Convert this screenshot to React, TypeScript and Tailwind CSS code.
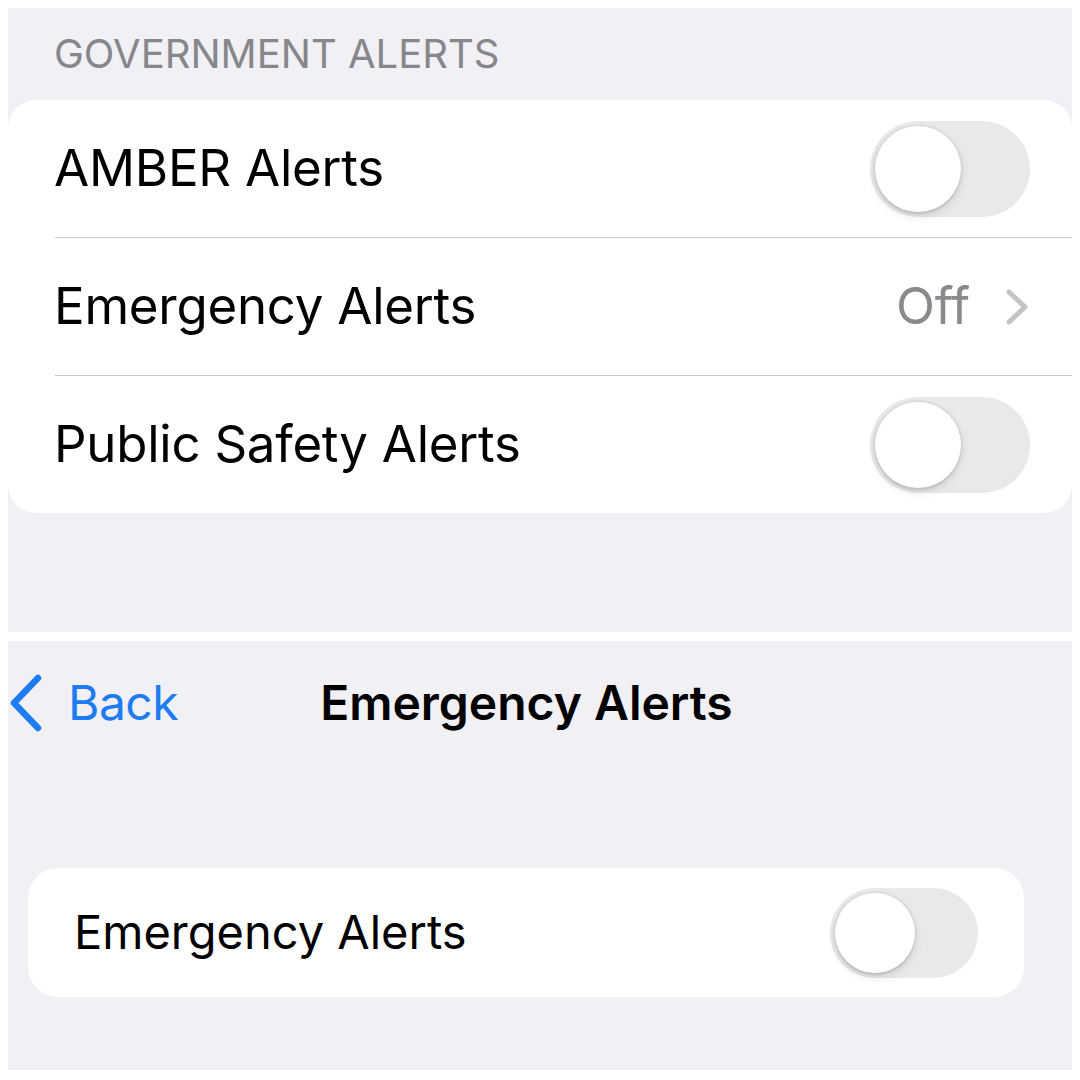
import React from 'react';

type SwitchSize = 'lg' | 'md';

// iOS style switch, always in its "off" state here
function Switch({ size = 'lg' }: { size?: SwitchSize }) {
  const track = size === 'lg' ? 'w-[160px] h-[96px] p-[5px]' : 'w-[148px] h-[90px] p-[5px]';
  const knob = size === 'lg' ? 'w-[86px] h-[86px]' : 'w-[80px] h-[80px]';
  return (
    <div className={`${track} shrink-0 rounded-full bg-[#e9e9eb] flex items-center`}>
      <div
        className={`${knob} rounded-full bg-white shadow-[0_0_0_2px_rgba(0,0,0,0.04),0_4px_10px_rgba(0,0,0,0.12),0_3px_1px_rgba(0,0,0,0.04)]`}
      />
    </div>
  );
}

function Chevron() {
  return (
    <svg width="26" height="38" viewBox="0 0 26 38" fill="none" className="shrink-0">
      <polyline points="5,4 21,19 5,34" stroke="#c4c4c7" strokeWidth="5" strokeLinecap="round" strokeLinejoin="round" />
    </svg>
  );
}

function BackChevron() {
  return (
    <svg width="36" height="58" viewBox="0 0 36 58" fill="none" className="shrink-0">
      <polyline points="29,4 5,29 29,54" stroke="#1d7cf2" strokeWidth="6.5" strokeLinecap="round" strokeLinejoin="round" />
    </svg>
  );
}

const Separator = () => <div className="h-px bg-[#c8c8cc] ml-[47px]" />;

export default function App() {
  return (
    <div className="w-[1080px] h-[1080px] bg-white pt-[8px] px-[8px] pb-[10px] flex flex-col font-['Inter',sans-serif] text-black antialiased">
      {/* Government alerts list */}
      <section className="h-[624px] shrink-0 bg-[#f0f0f5] flex flex-col">
        <div className="h-[92px] flex items-center pl-[46px] text-[40px] text-[#86868b]">
          GOVERNMENT ALERTS
        </div>
        <div className="bg-white rounded-[28px] flex flex-col text-[51px] tracking-[-0.25px]">
          <div className="h-[137px] flex items-center justify-between pl-[46px] pr-[42px]">
            <span>AMBER Alerts</span>
            <Switch />
          </div>
          <Separator />
          <div className="h-[137px] flex items-center justify-between pl-[46px] pr-[42px]">
            <span>Emergency Alerts</span>
            <div className="flex items-center gap-[34px]">
              <span className="text-[#8a8a8e]">Off</span>
              <Chevron />
            </div>
          </div>
          <Separator />
          <div className="h-[137px] flex items-center justify-between pl-[46px] pr-[42px]">
            <span>Public Safety Alerts</span>
            <Switch />
          </div>
        </div>
      </section>

      <div className="h-[9px] shrink-0" />

      {/* Emergency alerts detail screen */}
      <section className="flex-1 bg-[#f0f0f5] flex flex-col">
        <nav className="h-[124px] flex items-center pl-[1px]">
          <BackChevron />
          <span className="ml-[23px] text-[48px] tracking-[-0.5px] text-[#1d7cf2]">Back</span>
          <span className="ml-[142px] text-[48px] font-semibold">Emergency Alerts</span>
        </nav>
        <div className="mt-[103px] ml-[20px] w-[996px] h-[129px] bg-white rounded-[30px] flex items-center justify-between pl-[46px] pr-[46px]">
          <span className="text-[47px]">Emergency Alerts</span>
          <Switch size="md" />
        </div>
      </section>
    </div>
  );
}
